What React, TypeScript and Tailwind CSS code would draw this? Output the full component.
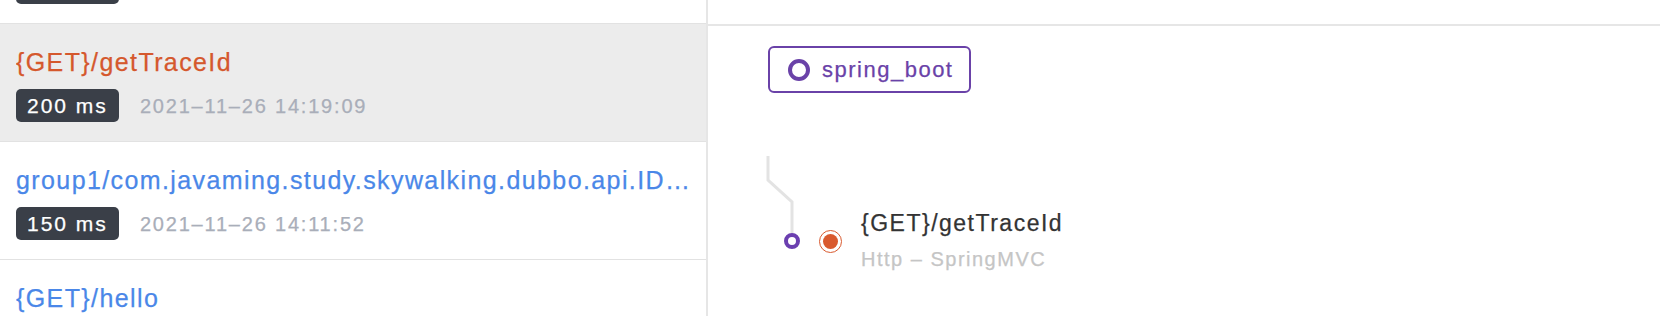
import React from 'react';

type Row = { title: string; ms: string; time: string; active?: boolean };

const rows: Row[] = [
  { title: '{GET}/hello', ms: '180 ms', time: '2021–11–26 14:20:31' },
  { title: '{GET}/getTraceId', ms: '200 ms', time: '2021–11–26 14:19:09', active: true },
  { title: 'group1/com.javaming.study.skywalking.dubbo.api.ID…', ms: '150 ms', time: '2021–11–26 14:11:52' },
  { title: '{GET}/hello', ms: '98 ms', time: '2021–11–26 14:10:03' },
];

export default function App() {
  return (
    <div className="flex h-[316px] w-[1660px] overflow-hidden bg-white font-['Liberation_Sans',Arial,sans-serif] tracking-[1.5px] [-webkit-text-stroke:0.25px]">
      <div className="w-[706px] shrink-0 overflow-hidden">
        <div className="-mt-[94px]">
          {rows.map((r, i) => (
            <div
              key={i}
              className={`h-[118px] border-b border-[#e2e2e2] px-4 pt-[22px] ${r.active ? 'bg-[#ececec]' : 'bg-white'}`}
            >
              <div
                className={`truncate text-[25px] leading-[32px] tracking-[1.4px] ${r.active ? 'text-[#d5582d]' : 'text-[#4a87e8]'}`}
              >
                {r.title}
              </div>
              <div className="mt-[11px] flex items-center">
                <span className="flex h-[33px] items-center rounded-[5px] bg-[#3a3f48] pl-[11px] pr-[11px] text-[21px] tracking-[2px] text-white">
                  {r.ms}
                </span>
                <span className="ml-[21px] text-[20px] tracking-[1.8px] text-[#a9aeb9]">{r.time}</span>
              </div>
            </div>
          ))}
        </div>
      </div>
      <div className="w-[2px] shrink-0 bg-[#e6e6e6]" />
      <div className="min-w-0 flex-1">
        <div className="h-[24px]" />
        <div className="h-[2px] bg-[#e6e6e6]" />
        <div className="pl-[60px]">
          <div className="mt-[20px] flex h-[47px] w-fit items-center rounded-[6px] border-2 border-[#6a42a8] pl-[18px] pr-[16px] text-[22px] text-[#6a42a8]">
            <span className="h-[22px] w-[22px] rounded-full border-[4px] border-[#6a42a8]" />
            <span className="ml-[12px]">spring_boot</span>
          </div>
          <div className="relative mt-[63px] pt-[53px]">
            <svg className="absolute left-[-2px] top-0" width="32" height="80" viewBox="0 0 32 80">
              <path d="M2 0 V24 L26 46 V78" stroke="#e3e3e3" strokeWidth="3" fill="none" />
            </svg>
            <div className="relative ml-[16px] flex items-center">
              <span className="h-[16px] w-[16px] shrink-0 rounded-full border-[4px] border-[#6b3fb0] bg-white" />
              <span className="ml-[19px] flex h-[23px] w-[23px] shrink-0 items-center justify-center rounded-full border-[1.5px] border-[#d95a2f] bg-white">
                <span className="h-[15px] w-[15px] rounded-full bg-[#d95a2f]" />
              </span>
              <div className="ml-[19px]">
                <div className="text-[23px] leading-[28px] text-[#333333]">{'{GET}/getTraceId'}</div>
                <div className="mt-[8px] text-[20px] leading-[28px] text-[#c5c5c5]">Http – SpringMVC</div>
              </div>
            </div>
          </div>
        </div>
      </div>
    </div>
  );
}
